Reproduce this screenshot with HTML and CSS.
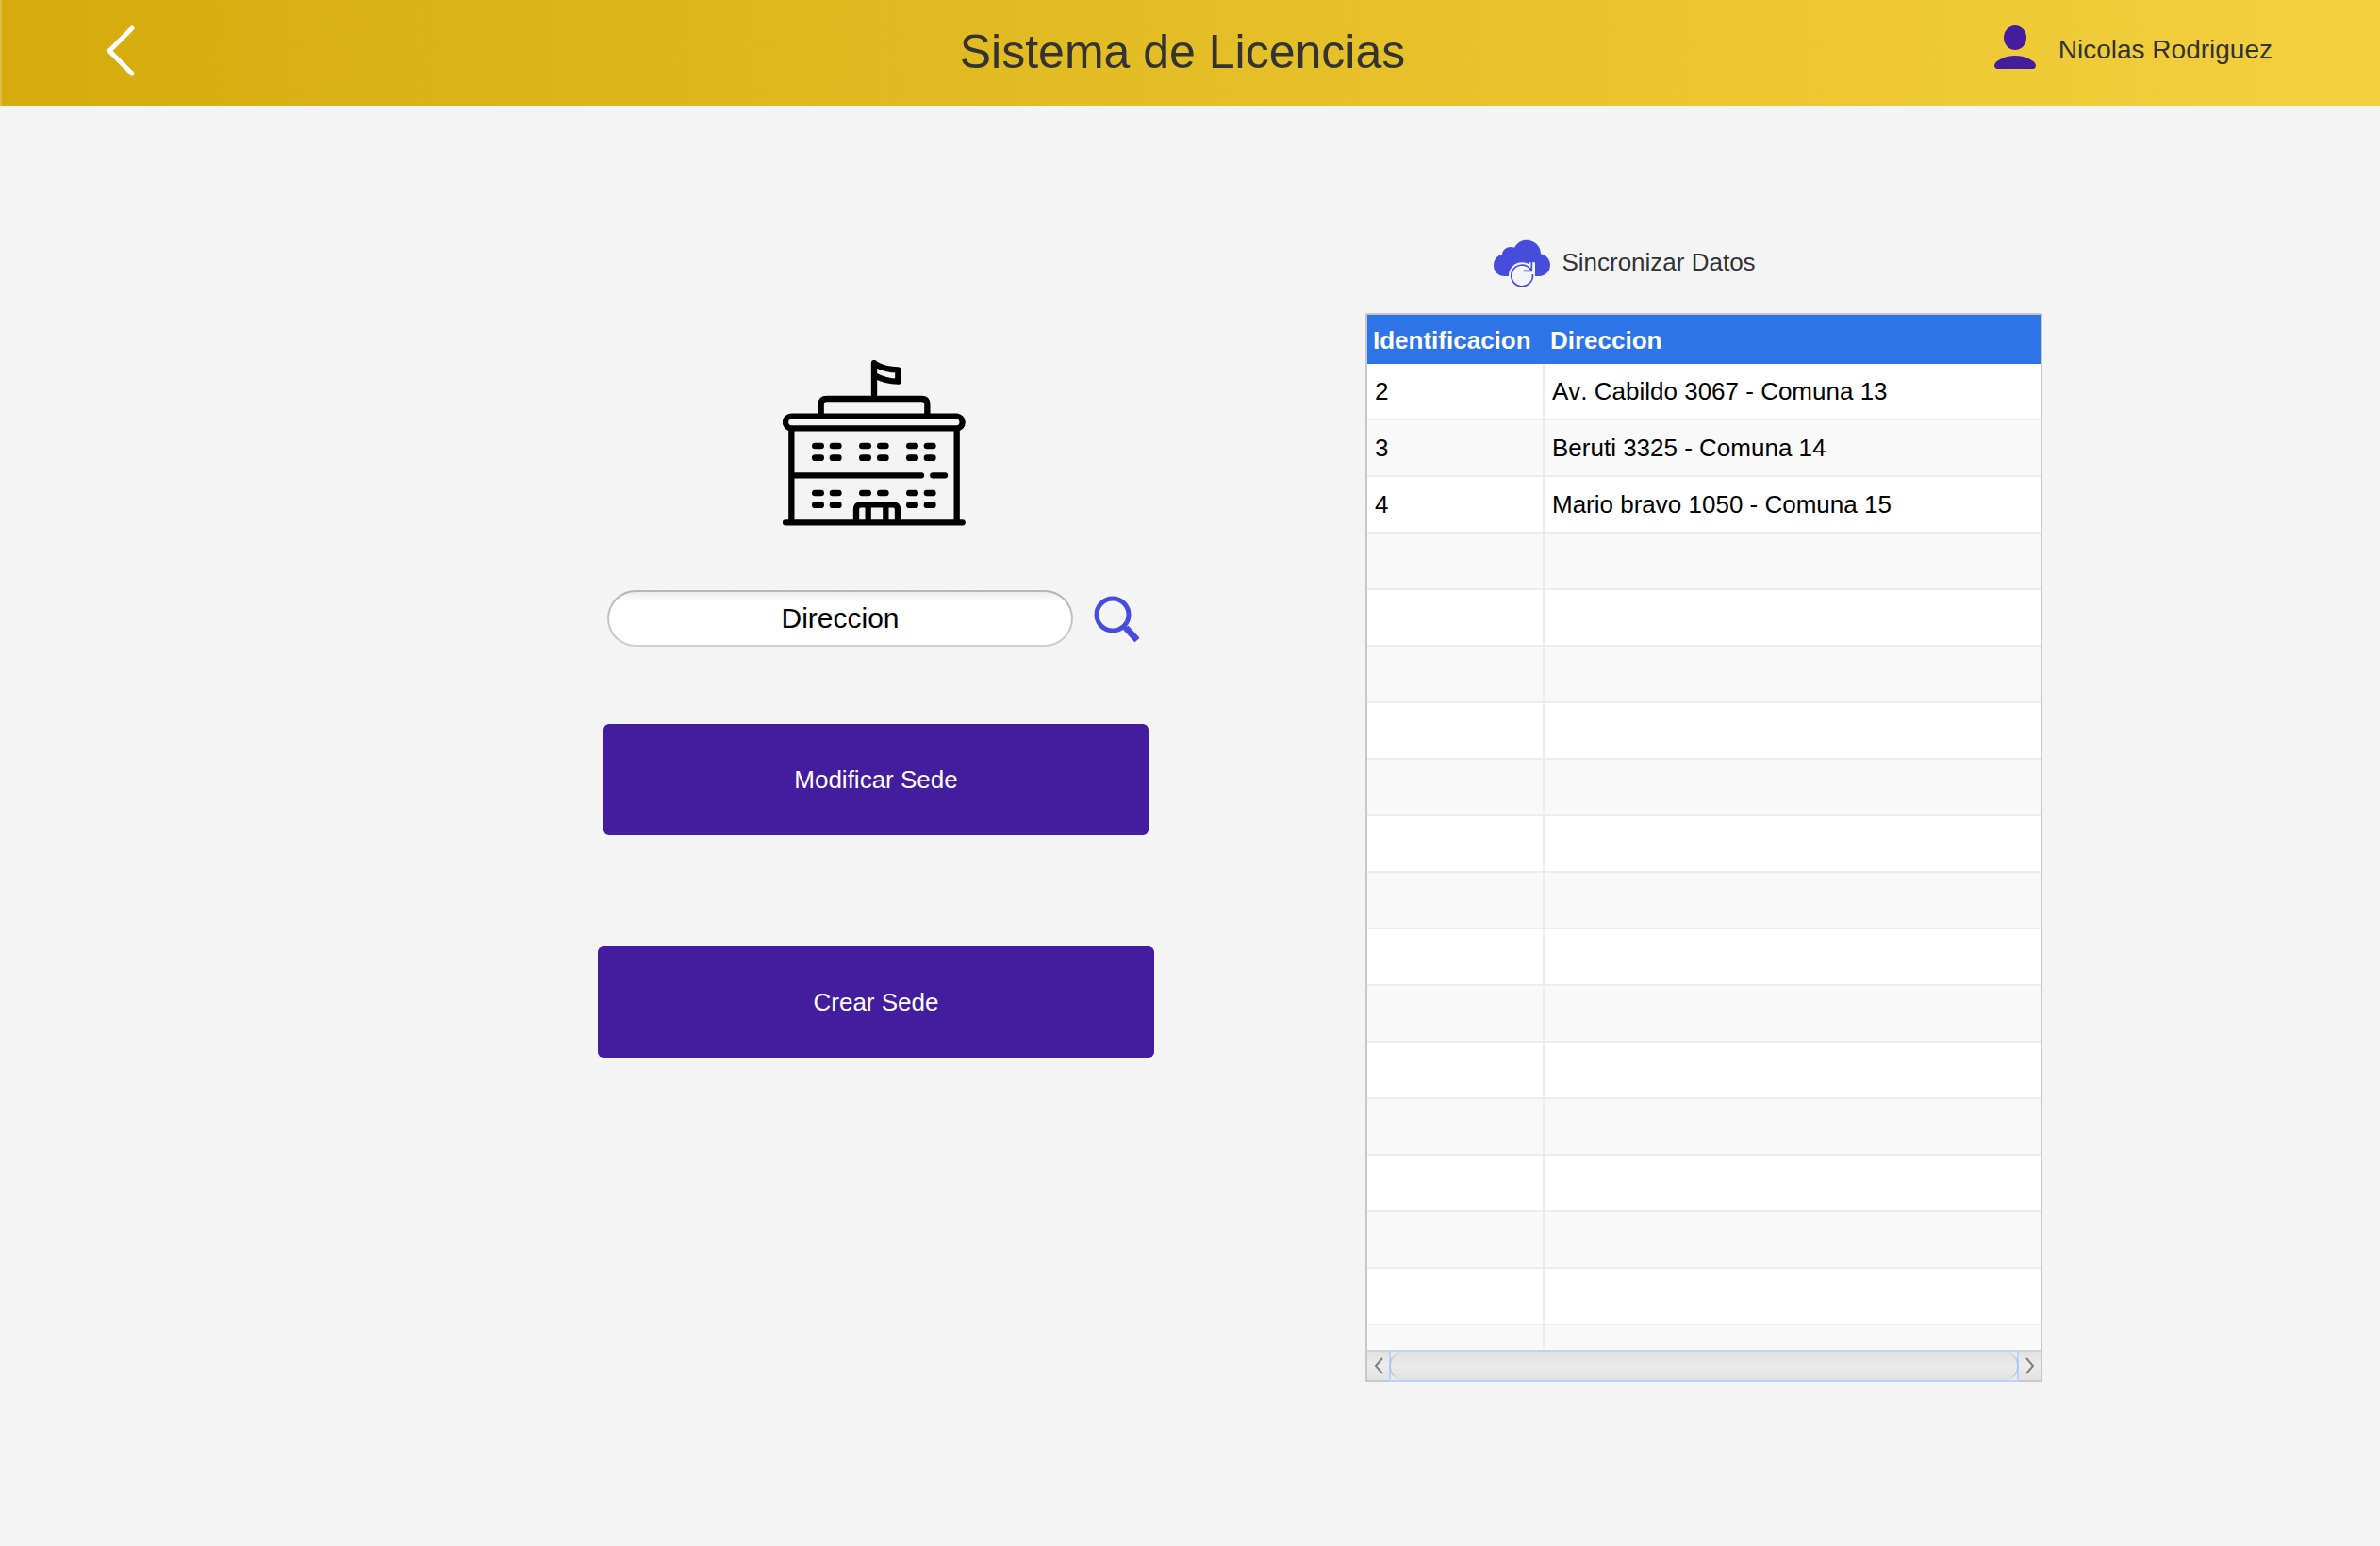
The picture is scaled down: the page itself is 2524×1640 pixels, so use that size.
FILE: index.html
```html
<!DOCTYPE html>
<html lang="es">
<head>
<meta charset="utf-8">
<meta name="viewport" content="width=device-width, initial-scale=1">
<title>Sistema de Licencias</title>
<link rel="stylesheet" href="styles.css">
</head>
<body>
<header class="topbar">
  <button class="icon-button back" type="button" aria-label="Volver">
    <svg class="back-icon" viewBox="-2 1 56 56" aria-hidden="true"><path d="M40 4 16 28l24 24"/></svg>
  </button>
  <h1 class="title">Sistema de Licencias</h1>
  <div class="user">
    <svg class="user-icon" viewBox="0 0 44 52" aria-hidden="true">
      <ellipse cx="22" cy="13" rx="12" ry="13"/>
      <path d="M0 42C1 37 12 32 22 32s21 5 22 10c0 2-1 4-3 4H3c-2 0-3-2-3-4z"/>
    </svg>
    <span class="user-name">Nicolas Rodriguez</span>
  </div>
</header>

<main class="content">
  <section class="actions">
    <svg class="school" viewBox="90 66 582 528" aria-hidden="true">
      <g class="school-lines">
        <path d="M381 188V75M381 77c25 14 48 20 76 20v37c-28 0-50-6-76-20"/>
        <path d="M212 240v-33q0-18 18-18h302q18 0 18 18v33"/>
        <rect x="99" y="245" width="563" height="38" rx="19"/>
        <path d="M118 285v297M644 285v297M99 583h563"/>
        <path d="M120 433h411M568 433h38"/>
        <path d="M324 580v-39q0-15 15-15h102q15 0 15 15v39M362 530v50M418 530v50"/>
      </g>
      <path class="school-windows" d="M193 339h19M249 339h19M343 339h19M400 339h18M493 339h19M549 339h19M193 377h19M249 377h19M343 377h19M400 377h18M493 377h19M549 377h19M193 489h19M249 489h19M343 489h19M400 489h18M493 489h19M549 489h19M193 527h19M249 527h19M493 527h19M549 527h19"/>
    </svg>
    <form class="search">
      <input class="search-input" type="text" value="Direccion" aria-label="Direccion">
      <button class="icon-button" type="button" aria-label="Buscar">
        <svg class="search-icon" viewBox="-1 -1 48 50" aria-hidden="true">
          <circle cx="19" cy="20" r="17"/>
          <path d="M29 31 35 37"/>
          <path class="search-handle" d="M33 34 45 47"/>
        </svg>
      </button>
    </form>
    <button class="action action-edit" type="button">Modificar Sede</button>
    <button class="action" type="button">Crear Sede</button>
  </section>

  <section class="data">
    <button class="icon-button sync" type="button">
      <svg class="sync-icon" viewBox="462 72 180 150" aria-hidden="true">
        <path class="cloud" d="M498 189c-22 0-36-16-36-34 0-19 11-32 27-35 1-19 22-29 39-22 9-16 22-24 38-24 27 0 46 20 46 44 18 4 30 18 30 36 0 20-15 35-36 35z"/>
        <circle class="sync-disc" cx="552" cy="187" r="42"/>
        <path class="sync-gap" d="M560 172h24v-27"/>
        <path class="sync-arrow" d="M586 183a34 34 0 1 1-9-19l7 7M557 172h26v-30"/>
      </svg>
      <span class="sync-label">Sincronizar Datos</span>
    </button>
    <div class="grid">
      <div class="grid-view">
        <table class="sites">
          <colgroup><col class="col-id"><col></colgroup>
          <thead><tr><th scope="col">Identificacion</th><th scope="col">Direccion</th></tr></thead>
          <tbody>
            <tr><td>2</td><td>Av. Cabildo 3067 - Comuna 13</td></tr>
            <tr><td>3</td><td>Beruti 3325 - Comuna 14</td></tr>
            <tr><td>4</td><td>Mario bravo 1050 - Comuna 15</td></tr>
            <tr><td></td><td></td></tr>
            <tr><td></td><td></td></tr>
            <tr><td></td><td></td></tr>
            <tr><td></td><td></td></tr>
            <tr><td></td><td></td></tr>
            <tr><td></td><td></td></tr>
            <tr><td></td><td></td></tr>
            <tr><td></td><td></td></tr>
            <tr><td></td><td></td></tr>
            <tr><td></td><td></td></tr>
            <tr><td></td><td></td></tr>
            <tr><td></td><td></td></tr>
            <tr><td></td><td></td></tr>
            <tr><td></td><td></td></tr>
            <tr><td></td><td></td></tr>
          </tbody>
        </table>
      </div>
      <div class="scrollbar">
        <button class="scroll-step" type="button" aria-label="Desplazar a la izquierda">
          <svg class="scroll-arrow" viewBox="0 0 10 18" aria-hidden="true"><path d="M9 1 2 9l7 8"/></svg>
        </button>
        <div class="scroll-track"><div class="scroll-thumb"></div></div>
        <button class="scroll-step" type="button" aria-label="Desplazar a la derecha">
          <svg class="scroll-arrow" viewBox="0 0 10 18" aria-hidden="true"><path d="M1 1 8 9 1 17"/></svg>
        </button>
      </div>
    </div>
  </section>
</main>
</body>
</html>
```

FILE: styles.css
```css
* {
  box-sizing: border-box;
}

body {
  margin: 0;
  min-height: 100vh;
  background: #f4f4f4;
  color: #333;
  font-family: "Liberation Sans", Arial, sans-serif;
  font-size: 26px;
  font-kerning: none;
}

button,
input {
  font: inherit;
  font-kerning: none;
}

.icon-button {
  display: flex;
  align-items: center;
  padding: 0;
  border: 0;
  background: none;
  color: inherit;
}

/* Top bar */
.topbar {
  display: grid;
  grid-template-columns: 1fr auto 1fr;
  align-items: center;
  height: 112px;
  padding: 0 114px 2px 98px;
  background: linear-gradient(to right, #d4ac0d, #f4d03f);
  box-shadow: inset 2px 0 rgba(244, 244, 244, 0.25);
}

.back {
  justify-self: start;
}

.back-icon {
  width: 56px;
  height: 56px;
  fill: none;
  stroke: #fff;
  stroke-width: 5;
  stroke-linecap: round;
  stroke-linejoin: round;
}

.title {
  margin: 0;
  font-size: 50px;
  font-weight: 400;
}

.user {
  display: flex;
  align-items: center;
  justify-self: end;
  gap: 24px;
  padding-bottom: 4px;
}

.user-icon {
  width: 44px;
  height: 52px;
  fill: #431d9e;
}

.user-name {
  font-size: 28px;
}

/* Two-column body */
.content {
  display: grid;
  grid-template-columns: 634fr 590fr 224fr 718fr 358fr;
  align-items: start;
}

.actions {
  grid-column: 2;
  display: flex;
  flex-direction: column;
  align-items: center;
  padding-top: 270px;
}

.school {
  width: 194px;
  height: 176px;
  margin-right: 4px;
  fill: none;
  stroke: #000;
  stroke-linecap: round;
  stroke-linejoin: round;
}

.school-lines {
  stroke-width: 19;
}

.school-windows {
  stroke-width: 20;
}

.search {
  display: flex;
  align-items: center;
  gap: 22px;
  width: 100%;
  margin: 68px 0 82px;
  padding: 0 16px 0 10px;
}

.search-input {
  flex: 1;
  min-width: 0;
  height: 60px;
  border: 2px solid transparent;
  border-radius: 30px;
  background:
    linear-gradient(#ececec, #fff 10px) padding-box,
    linear-gradient(#b6b6b6, #cfcfcf) border-box;
  color: #000;
  font-size: 30px;
  text-align: center;
}

.search-icon {
  width: 48px;
  height: 50px;
  fill: none;
  stroke: #464ddd;
  stroke-width: 5;
}

.search-handle {
  stroke-width: 7;
}

.action {
  width: 100%;
  height: 118px;
  border: 0;
  border-radius: 6px;
  background: #431d9e;
  color: #fff;
}

.action-edit {
  width: 98%;
  margin-bottom: 118px;
}

.data {
  grid-column: 4;
  padding-top: 142px;
}

.sync {
  gap: 12px;
  margin: 0 0 28px 19%;
}

.sync-label {
  padding-bottom: 2px;
}

.sync-icon {
  width: 60px;
  height: 50px;
}

.cloud {
  fill: #464ddd;
}

.sync-disc {
  fill: #f4f4f4;
}

.sync-gap,
.sync-arrow {
  fill: none;
  stroke: #f4f4f4;
  stroke-width: 20;
}

.sync-arrow {
  stroke: #464ddd;
  stroke-width: 5;
}

/* Data table */
.grid {
  border: 2px solid #c8c8c8;
  border-bottom: 0;
}

.grid-view {
  height: 1098px;
  overflow: hidden;
  background: #fff;
}

.sites {
  width: 100%;
  table-layout: fixed;
  border-spacing: 0;
  color: #000;
}

.col-id {
  width: 188px;
}

.sites th {
  height: 52px;
  padding: 2px 6px 0;
  background: #2d74e9;
  color: #fff;
  text-align: left;
}

.sites td {
  height: 60px;
  padding: 0 8px;
  border-bottom: 2px solid #ededed;
}

.sites td:first-child {
  border-right: 2px solid #ededed;
}

.sites tr:nth-child(even) td {
  background: #f9f9f9;
}

.scrollbar {
  display: flex;
  height: 34px;
}

.scroll-step {
  display: flex;
  align-items: center;
  justify-content: center;
  width: 23px;
  padding: 0;
  border: 0;
  border-top: 2px solid #d4d4d4;
  border-bottom: 2px solid #c8c8c8;
  background: linear-gradient(#e2e2e2, #ececec 50%, #e2e2e2);
}

.scroll-arrow {
  width: 10px;
  height: 18px;
  fill: none;
  stroke: #808080;
  stroke-width: 2;
}

.scroll-track {
  flex: 1;
  border: 2px solid #bcd5f7;
  background: #e9e9e9;
}

.scroll-thumb {
  height: 100%;
  margin: 0 -2px;
  border: solid #a9c9f7;
  border-width: 0 2px;
  border-radius: 16px;
  background: linear-gradient(#e1e1e1, #ebebeb 50%, #e1e1e1);
}
```
